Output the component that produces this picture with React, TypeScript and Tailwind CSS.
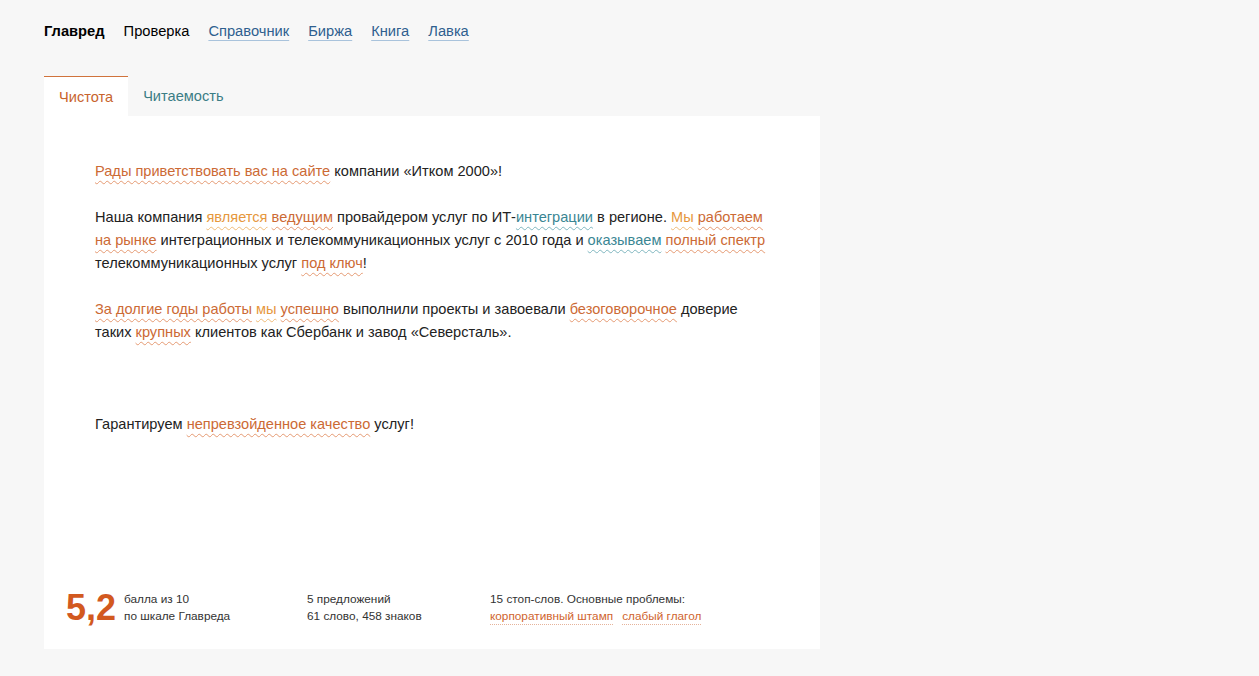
import React from "react";

type Kind = "stop" | "light" | "teal";

const markClass: Record<Kind, string> = {
  stop: "text-[#cc6a35] underline decoration-wavy decoration-[#e59a72] decoration-1 underline-offset-[4px]",
  light: "text-[#e6983d] underline decoration-wavy decoration-[#efbb78] decoration-1 underline-offset-[4px]",
  teal: "text-[#3a8693] underline decoration-wavy decoration-[#7fb6bf] decoration-1 underline-offset-[4px]",
};

const M: React.FC<{ k?: Kind; children: React.ReactNode }> = ({ k = "stop", children }) => (
  <span className={markClass[k]}>{children}</span>
);

const navLinks = ["Справочник", "Биржа", "Книга", "Лавка"];

const App: React.FC = () => {
  return (
    <div
      className="min-h-screen bg-[#f7f7f7] pl-[44px] text-[#222]"
      style={{ fontFamily: '"Liberation Sans", Arial, sans-serif' }}
    >
      {/* Top nav */}
      <nav className="flex items-center gap-[19px] pt-[22px] text-[14.7px] leading-[18px]">
        <span className="font-bold text-black">Главред</span>
        <span className="text-black">Проверка</span>
        {navLinks.map((l) => (
          <a
            key={l}
            href="#"
            className="text-[#2f5f8f] underline decoration-[#a9c3dc] decoration-1 underline-offset-[4px]"
          >
            {l}
          </a>
        ))}
      </nav>

      {/* Tabs */}
      <div className="mt-[36px] flex text-[14.6px]">
        <div className="flex h-[40px] items-center border-t border-[#d0733c] bg-white px-[15px] pt-[2px] text-[#c8642e]">
          Чистота
        </div>
        <div className="flex h-[40px] items-center px-[15px] pt-[2px] text-[#3b7d85]">Читаемость</div>
      </div>

      {/* Card */}
      <div className="flex h-[533px] w-[776px] flex-col bg-white">
        <div className="w-[729px] pl-[51px] pt-[44px] text-[14.6px] leading-[23px]">
          <p className="mb-[23px]">
            <M>Рады приветствовать вас на сайте</M> компании «Итком 2000»!
          </p>
          <p className="mb-[23px]">
            Наша компания <M k="light">является</M> <M>ведущим</M> провайдером услуг по ИТ-
            <M k="teal">интеграции</M> в регионе. <M k="light">Мы</M> <M>работаем</M>{" "}
            <M>на рынке</M> интеграционных и телекоммуникационных услуг с 2010 года и{" "}
            <M k="teal">оказываем</M> <M>полный спектр</M> телекоммуникационных услуг{" "}
            <M>под ключ</M>!
          </p>
          <p className="mb-[23px]">
            <M>За долгие годы работы</M> <M k="light">мы</M> <M>успешно</M> выполнили проекты и
            завоевали <M>безоговорочное</M> доверие таких <M>крупных</M> клиентов как Сбербанк и
            завод «Северсталь».
          </p>
          <p className="mb-[23px]">&nbsp;</p>
          <p>
            Гарантируем <M>непревзойденное качество</M> услуг!
          </p>
        </div>

        {/* Footer stats */}
        <div
          className="mt-auto flex items-center pb-[21px] pl-[22px] text-[11.8px] leading-[17px] text-[#333]"
          style={{ fontFamily: '"Liberation Sans Narrow", "Arial Narrow", "Liberation Sans", Arial, sans-serif' }}
        >
          <div className="flex w-[241px] items-center">
            <span
              className="mr-[8px] text-[36px] font-bold leading-[40px] text-[#d2591f]"
              style={{ fontFamily: '"Liberation Sans", Arial, sans-serif' }}
            >
              5,2
            </span>
            <div>
              <div>балла из 10</div>
              <div>по шкале Главреда</div>
            </div>
          </div>
          <div className="w-[183px]">
            <div>5 предложений</div>
            <div>61 слово, 458 знаков</div>
          </div>
          <div>
            <div>15 стоп-слов. Основные проблемы:</div>
            <div className="flex gap-[9px] text-[#d0642e]">
              <span className="border-b border-dotted border-[#e6b39a] leading-[16px]">
                корпоративный штамп
              </span>
              <span className="border-b border-dotted border-[#e6b39a] leading-[16px]">
                слабый глагол
              </span>
            </div>
          </div>
        </div>
      </div>
    </div>
  );
};

export default App;
